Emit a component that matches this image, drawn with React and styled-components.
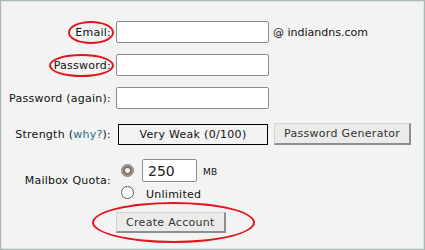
import { createGlobalStyle } from "styled-components";
import styled from "styled-components";

const Global = createGlobalStyle`
html, body {
    margin: 0;
    padding: 0;
    background: #ffffff;
}
body {
    font-family: "DejaVu Sans", Verdana, sans-serif;
    font-size: 11px;
    color: #111;
}
`

const Panel = styled.div`
width: 425px;
height: 250px;
box-sizing: border-box;
border: 1px solid #a9bab6;
box-shadow: inset 1px 1px 0 #dfe7e4, inset -1px -1px 0 #dfe7e4;
background: #f2f3f2;
padding-top: 20px;
`

const Row = styled.div`
display: flex;
align-items: center;
height: ${p => p.h || 22}px;
margin-bottom: ${p => p.mb || 0}px;
`

const Label = styled.div`
width: 112px;
flex: none;
text-align: right;
padding-right: 2px;
box-sizing: border-box;
margin-right: 3px;
white-space: nowrap;
letter-spacing: 0.25px;
`

// circled annotation, drawn over the text
const Marked = styled.span`
position: relative;
display: inline-block;
&::after{
    content: "";
    position: absolute;
    left: ${p => p.l}px;
    right: ${p => p.r}px;
    top: ${p => p.t}px;
    bottom: ${p => p.t}px;
    border: 2px solid #e3161d;
    border-radius: 50%;
    pointer-events: none;
}
`

const Input = styled.input`
box-sizing: border-box;
width: ${p => p.w || 153}px;
height: ${p => p.h || 22}px;
border: 1px solid #8c8c8c;
border-radius: 2px;
background: #fff;
font-family: "DejaVu Sans", Verdana, sans-serif;
font-size: 14px;
color: #222;
padding: 0 5px;
margin: 0;
outline: none;
`

const Suffix = styled.span`
margin-left: ${p => p.ml || 4}px;
margin-top: ${p => p.mt || 0}px;
font-size: ${p => p.fs || 11}px;
`

const Why = styled.a`
color: #1d6e8c;
text-decoration: none;
`

const Meter = styled.div`
box-sizing: border-box;
width: 150px;
height: 21px;
margin-left: 2px;
border: 1px solid #000;
display: flex;
align-items: center;
justify-content: center;
font-size: 11px;
letter-spacing: 0.3px;
`

const Button = styled.button`
box-sizing: border-box;
height: ${p => p.h || 22}px;
padding: 0 ${p => p.px || 10}px;
margin-left: ${p => p.ml || 0}px;
background: #ebebea;
border: 1px solid #d4d4d4;
border-right: 2px solid #8e8e8e;
border-bottom: 2px solid #8e8e8e;
font-family: "DejaVu Sans", Verdana, sans-serif;
font-size: 11px;
color: #333;
letter-spacing: 0.3px;
cursor: pointer;
`

const Options = styled.div`
display: flex;
flex-direction: column;
`

const Option = styled.label`
display: flex;
align-items: center;
height: ${p => p.h}px;
letter-spacing: 0.25px;
`

const Radio = styled.span`
box-sizing: border-box;
width: 13px;
height: 13px;
border-radius: 50%;
margin: 0 8px 0 5px;
flex: none;
background: ${p => p.on
    ? "radial-gradient(circle, #f4f1ec 0 2px, #7c736a 3px 4px, #a59c92 5px)"
    : "#fff"};
border: 1px solid ${p => p.on ? "#8a8178" : "#5e5e5e"};
`

function App() {
    return (
        <Panel>
            <Global />
            <Row mb={11}>
                <Label><Marked l={-7} r={-3} t={-5}>Email:</Marked></Label>
                <Input />
                <Suffix>@ indiandns.com</Suffix>
            </Row>
            <Row mb={11}>
                <Label><Marked l={-5} r={-3} t={-5}>Password:</Marked></Label>
                <Input type="password" />
            </Row>
            <Row mb={14}>
                <Label>Password (again):</Label>
                <Input type="password" />
            </Row>
            <Row mb={13}>
                <Label>Strength (<Why href="#">why?</Why>):</Label>
                <Meter>Very Weak (0/100)</Meter>
                <Button ml={6} px={9}>Password Generator</Button>
            </Row>
            <Row h={44} mb={10}>
                <Label>Mailbox Quota:</Label>
                <Options>
                    <Option h={25}>
                        <Radio on />
                        <Input w={55} h={23} defaultValue="250" />
                        <Suffix ml={6} mt={2} fs={9}>MB</Suffix>
                    </Option>
                    <Option h={19}>
                        <Radio />
                        <Suffix ml={0} mt={3}>Unlimited</Suffix>
                    </Option>
                </Options>
            </Row>
            <Row h={21}>
                <Label />
                <Marked l={-24} r={-29} t={-10}>
                    <Button h={21} px={9}>Create Account</Button>
                </Marked>
            </Row>
        </Panel>
    )
}
export default App;
